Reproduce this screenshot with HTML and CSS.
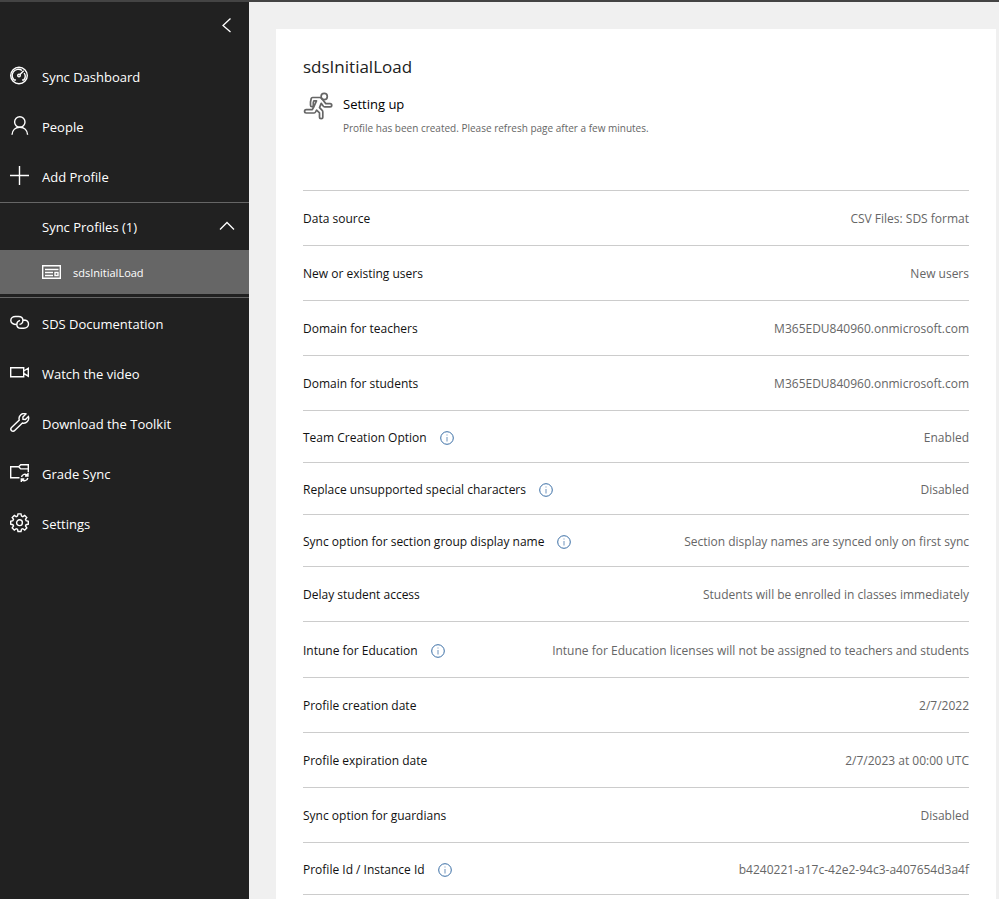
FILE: index.html
```html
<!DOCTYPE html>
<html lang="en">
<head>
<meta charset="utf-8">
<meta name="viewport" content="width=device-width, initial-scale=1">
<title>School Data Sync</title>
<link rel="stylesheet" href="styles.css">
</head>
<body>
<svg class="sprite" aria-hidden="true">
  <symbol id="info" viewBox="0 0 14 14"><circle cx="7" cy="7" r="6.3" fill="none" stroke="#3a6ea5"/><path d="M7 6v4.500" fill="none" stroke="#6f93bc"/><path d="M6.500 3.500h1v1h-1z" fill="#6f93bc" stroke="none"/></symbol>
</svg>
<div class="shell">
  <nav class="sidebar" aria-label="Main">
    <button class="collapse" type="button" aria-label="Collapse menu">
      <svg class="chevron" viewBox="0 0 16 16"><path d="M11.500 1.500L4 8.500l7.500 6.500"/></svg>
    </button>
    <a class="item" href="#"><svg class="icon" viewBox="0 0 20 20"><circle cx="9" cy="9.500" r="8.300"/><path d="M4.700 14.500a6 6 0 0 1 7.300-10M14.200 7a6 6 0 0 1-.9 7.500" /><path d="M4.700 14.500l1-1M13.300 14.500l-1-1M9.700 8.800l4-4"/><circle cx="9" cy="9.600" r="1.300"/></svg><span>Sync Dashboard</span></a>
    <a class="item" href="#"><svg class="icon" viewBox="0 0 20 20"><circle cx="9.800" cy="6" r="5.200"/><path d="M2 18.700c.3-4.500 3.500-7.500 7.800-7.500s7.500 3 7.800 7.500"/></svg><span>People</span></a>
    <a class="item" href="#"><svg class="icon" viewBox="0 0 20 20"><path d="M0 9.500h19M9.500 0v19"/></svg><span>Add Profile</span></a>
    <section class="group">
      <button class="group-head" type="button" aria-expanded="true"><span>Sync Profiles (1)</span><svg class="chevron" viewBox="0 0 16 16"><path d="M1 10.500l7-7 7 7"/></svg></button>
      <a class="subitem" href="#" aria-current="page"><svg class="icon" viewBox="0 0 20 20"><path d="M.7 2.700h17.600v12.600H.7z"/><path d="M3 6.500h13.500M3 9.500h8M3 12.500h8M13 9.500h3v3h-3z"/></svg><span>sdsInitialLoad</span></a>
    </section>
    <a class="item" href="#"><svg class="icon" viewBox="0 0 20 20"><path d="M6.500 11.500C3 11.500.8 9.800.8 7.500S2.800 3.500 5.500 3.500h3c2.600 0 4.400 1.700 4.400 3.900 0 2.200-1.500 3.600-3.400 4M13.500 7c3 0 5 1.800 5 4.100s-2 4.100-4.600 4.100h-2.800c-2.600 0-4.300-1.700-4.300-3.800 0-2.200 1.400-3.500 3.200-4"/></svg><span>SDS Documentation</span></a>
    <a class="item" href="#"><svg class="icon" viewBox="0 0 20 20"><path d="M.7 4.700h13v9H.7zM13.700 8l4.600-2.800v8l-4.600-2.800"/></svg><span>Watch the video</span></a>
    <a class="item" href="#"><svg class="icon" viewBox="0 0 20 20"><path d="M15.900.9a5 5 0 0 0-6.600 6.200L1.500 14.500a2.200 2.200 0 0 0 3.200 3.100l7.700-7.600a5 5 0 0 0 6-6.500l-3 3-2.400-.1-.1-2.400z"/></svg><span>Download the Toolkit</span></a>
    <a class="item" href="#"><svg class="icon" viewBox="0 0 20 20"><path d="M9.500 14.700H.7v-11h8l2-2h7.600v7.500M8.700 3.700l2 2.200h7.600"/><path d="M11.500 14a3.400 3.400 0 0 1 6-1.500M17.800 15a3.400 3.400 0 0 1-6 1.500M18 10v3h-3M11.300 19v-3h3"/></svg><span>Grade Sync</span></a>
    <a class="item" href="#"><svg class="icon" viewBox="0 0 20 20"><path d="M8 .9h3l.5 2.200 1.300.6 1.900-1.300 2.100 2.100-1.300 1.900.6 1.300 2.200.5v3l-2.200.5-.6 1.300 1.300 1.900-2.100 2.100-1.900-1.300-1.300.6-.5 2.200H8l-.5-2.200-1.300-.6L4.300 17l-2.100-2.100L3.500 13l-.6-1.300-2.200-.5v-3l2.200-.5.6-1.300-1.300-1.900 2.100-2.100 1.900 1.300 1.300-.6z"/><circle cx="9.500" cy="9.700" r="2.900"/></svg><span>Settings</span></a>
  </nav>
  <main class="content">
    <article class="card">
      <h1>sdsInitialLoad</h1>
      <div class="status">
        <svg class="runner" viewBox="0 0 30 28"><circle cx="21.200" cy="4.500" r="3.100"/><path d="M16.800 5.500H9.600a1.500 1.500 0 0 0-1.400 1.100L7.500 10v3.200a1.400 1.400 0 0 0 2.800 0V10.500l.6-1.700h2.600L11 14.500l-1.700 3.200H3.200a1.600 1.600 0 0 0 0 3.300h7.600a2 2 0 0 0 1.600-.9l1.200-2 2.900 2.700v4.300a1.600 1.600 0 0 0 3.300 0v-5.200a2 2 0 0 0-.6-1.500l-2.700-2.800 1.700-4.200 2.200 2.800a2 2 0 0 0 1.500.7h5.200a1.600 1.600 0 0 0 0-3.300h-4.300L19.500 7.500q-1-2-2.700-2z"/></svg>
        <div><h2>Setting up</h2><p>Profile has been created. Please refresh page after a few minutes.</p></div>
      </div>
      <dl class="details">
        <div class="row"><dt>Data source</dt><dd>CSV Files: SDS format</dd></div>
        <div class="row"><dt>New or existing users</dt><dd>New users</dd></div>
        <div class="row"><dt>Domain for teachers</dt><dd>M365EDU840960.onmicrosoft.com</dd></div>
        <div class="row"><dt>Domain for students</dt><dd>M365EDU840960.onmicrosoft.com</dd></div>
        <div class="row compact"><dt>Team Creation Option <button class="info" type="button" aria-label="About team creation"><svg><use href="#info"/></svg></button></dt><dd>Enabled</dd></div>
        <div class="row compact"><dt>Replace unsupported special characters <button class="info" type="button" aria-label="About special characters"><svg><use href="#info"/></svg></button></dt><dd>Disabled</dd></div>
        <div class="row compact"><dt>Sync option for section group display name <button class="info" type="button" aria-label="About display names"><svg><use href="#info"/></svg></button></dt><dd>Section display names are synced only on first sync</dd></div>
        <div class="row"><dt>Delay student access</dt><dd>Students will be enrolled in classes immediately</dd></div>
        <div class="row tall"><dt>Intune for Education <button class="info" type="button" aria-label="About Intune"><svg><use href="#info"/></svg></button></dt><dd>Intune for Education licenses will not be assigned to teachers and students</dd></div>
        <div class="row"><dt>Profile creation date</dt><dd>2/7/2022</dd></div>
        <div class="row"><dt>Profile expiration date</dt><dd>2/7/2023 at 00:00 UTC</dd></div>
        <div class="row"><dt>Sync option for guardians</dt><dd>Disabled</dd></div>
        <div class="row compact"><dt>Profile Id / Instance Id <button class="info" type="button" aria-label="About profile ID"><svg><use href="#info"/></svg></button></dt><dd>b4240221-a17c-42e2-94c3-a407654d3a4f</dd></div>
      </dl>
    </article>
  </main>
</div>
</body>
</html>
```
FILE: styles.css
```css
* { box-sizing: border-box; }
body {
  margin: 0;
  font-family: "Segoe UI", "Open Sans", "Noto Sans", sans-serif;
  font-size: 13px;
  line-height: 20px;
  color: #212121;
  background: #f0f0f0;
}
button { margin: 0; padding: 0; border: 0; background: none; color: inherit; font: inherit; cursor: pointer; }
a { color: inherit; text-decoration: none; }
svg { display: block; flex: none; fill: none; stroke: currentColor; }
.sprite { position: absolute; width: 0; height: 0; }
.shell { display: flex; min-height: 100vh; border-top: 2px solid #444; }

.sidebar { flex: 0 0 249px; background: #212121; color: #fff; }
.collapse { display: flex; align-items: center; justify-content: flex-end; width: 100%; height: 50px; padding: 0 14px 4px 0; }
.chevron { width: 16px; height: 16px; stroke-width: 1.3; }
.item { display: flex; align-items: center; gap: 12px; height: 50px; padding-left: 10px; }
.icon { width: 20px; height: 20px; stroke-width: 1.4; }
.item .icon { margin-bottom: 2px; }
.group { margin-bottom: 1px; padding-bottom: 3px; border: 1px solid #666; border-width: 1px 0; }
.group-head { display: flex; align-items: center; justify-content: space-between; width: 100%; height: 47px; padding: 0 14px 0 42px; }
.subitem { display: flex; align-items: center; gap: 11px; height: 44px; padding: 2px 0 0 42px; background: #666; font-size: 11px; }

.content { flex: 1; min-width: 0; padding: 27px 3px 0 27px; }
.card { min-height: 100%; padding: 27px 27px 0; background: #fff; }
h1 { margin: 0; font-size: 17px; line-height: 22px; font-weight: 400; }
.status { display: flex; gap: 10px; height: 112px; padding-top: 14px; }
.runner { width: 30px; height: 28px; color: #666; stroke-width: 1.7; stroke-linejoin: round; }
h2 { margin: 0; font-size: 13px; line-height: 24px; font-weight: 400; color: #000; }
.status p { margin: 0; font-size: 10px; line-height: 24px; color: #666; }
.details { margin: 0; border-top: 1px solid #ccc; font-size: 12px; }
.row { display: flex; align-items: center; justify-content: space-between; gap: 16px; min-height: 55px; padding-top: 2px; border-bottom: 1px solid #ccc; }
.compact { min-height: 52px; }
.tall { min-height: 56px; }
dt { display: flex; align-items: center; gap: 13px; font-weight: 500; color: #111; }
dd { margin: 0; text-align: right; color: #666; }
.info svg { width: 14px; height: 14px; }
```
